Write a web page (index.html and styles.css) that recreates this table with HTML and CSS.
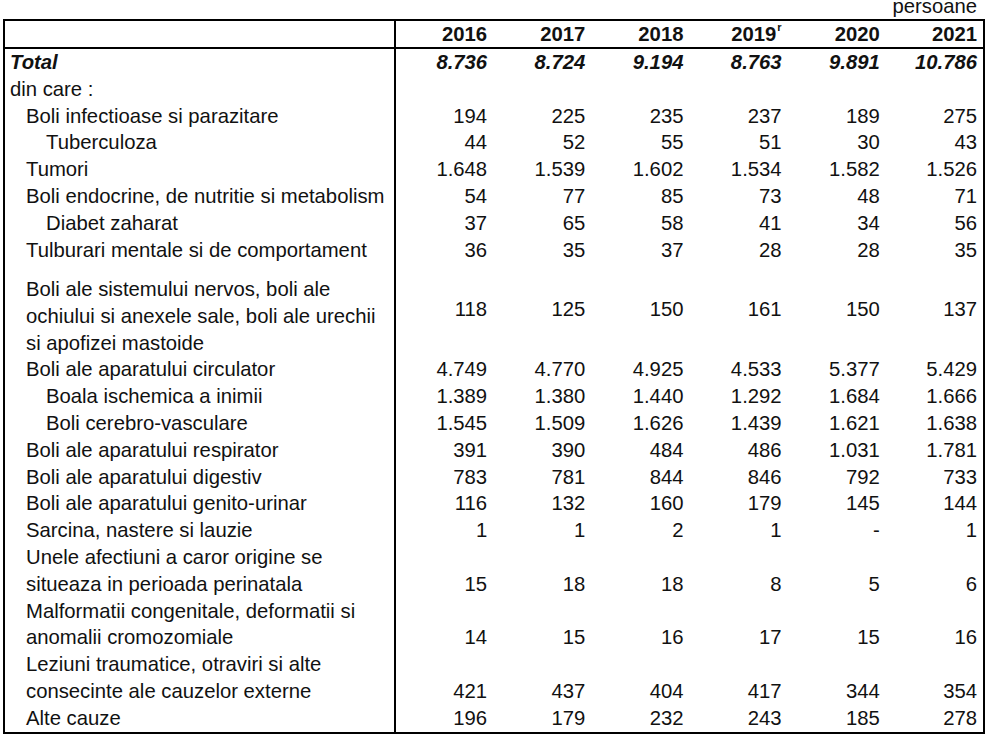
FILE: index.html
```html
<!DOCTYPE html>
<html>
<head>
<meta charset="utf-8">
<link rel="stylesheet" href="styles.css">
</head>
<body>
<div class="page">
  <div class="unit">persoane</div>
  <table class="data">
    <colgroup>
      <col class="c-label"><col><col><col><col><col><col>
    </colgroup>
    <thead>
      <tr class="head">
        <th class="label"></th>
        <th>2016</th><th>2017</th><th>2018</th><th>2019<span class="sup">r</span></th><th>2020</th><th>2021</th>
      </tr>
    </thead>
    <tbody>
      <tr class="total">
        <td class="label l0">Total</td>
        <td>8.736</td><td>8.724</td><td>9.194</td><td>8.763</td><td>9.891</td><td>10.786</td>
      </tr>
      <tr>
        <td class="label l0">din care :</td>
        <td></td><td></td><td></td><td></td><td></td><td></td>
      </tr>
      <tr>
        <td class="label l1">Boli infectioase si parazitare</td>
        <td>194</td><td>225</td><td>235</td><td>237</td><td>189</td><td>275</td>
      </tr>
      <tr>
        <td class="label l2">Tuberculoza</td>
        <td>44</td><td>52</td><td>55</td><td>51</td><td>30</td><td>43</td>
      </tr>
      <tr>
        <td class="label l1">Tumori</td>
        <td>1.648</td><td>1.539</td><td>1.602</td><td>1.534</td><td>1.582</td><td>1.526</td>
      </tr>
      <tr>
        <td class="label l1">Boli endocrine, de nutritie si metabolism</td>
        <td>54</td><td>77</td><td>85</td><td>73</td><td>48</td><td>71</td>
      </tr>
      <tr>
        <td class="label l2">Diabet zaharat</td>
        <td>37</td><td>65</td><td>58</td><td>41</td><td>34</td><td>56</td>
      </tr>
      <tr>
        <td class="label l1">Tulburari mentale si de comportament</td>
        <td>36</td><td>35</td><td>37</td><td>28</td><td>28</td><td>35</td>
      </tr>
      <tr class="tall">
        <td class="label l1">Boli ale sistemului nervos, boli ale<br>ochiului si anexele sale, boli ale urechii<br>si apofizei mastoide</td>
        <td>118</td><td>125</td><td>150</td><td>161</td><td>150</td><td>137</td>
      </tr>
      <tr>
        <td class="label l1">Boli ale aparatului circulator</td>
        <td>4.749</td><td>4.770</td><td>4.925</td><td>4.533</td><td>5.377</td><td>5.429</td>
      </tr>
      <tr>
        <td class="label l2">Boala ischemica a inimii</td>
        <td>1.389</td><td>1.380</td><td>1.440</td><td>1.292</td><td>1.684</td><td>1.666</td>
      </tr>
      <tr>
        <td class="label l2">Boli cerebro-vasculare</td>
        <td>1.545</td><td>1.509</td><td>1.626</td><td>1.439</td><td>1.621</td><td>1.638</td>
      </tr>
      <tr>
        <td class="label l1">Boli ale aparatului respirator</td>
        <td>391</td><td>390</td><td>484</td><td>486</td><td>1.031</td><td>1.781</td>
      </tr>
      <tr>
        <td class="label l1">Boli ale aparatului digestiv</td>
        <td>783</td><td>781</td><td>844</td><td>846</td><td>792</td><td>733</td>
      </tr>
      <tr>
        <td class="label l1">Boli ale aparatului genito-urinar</td>
        <td>116</td><td>132</td><td>160</td><td>179</td><td>145</td><td>144</td>
      </tr>
      <tr>
        <td class="label l1">Sarcina, nastere si lauzie</td>
        <td>1</td><td>1</td><td>2</td><td>1</td><td class="dash">-</td><td>1</td>
      </tr>
      <tr class="two">
        <td class="label l1">Unele afectiuni a caror origine se<br>situeaza in perioada perinatala</td>
        <td>15</td><td>18</td><td>18</td><td>8</td><td>5</td><td>6</td>
      </tr>
      <tr class="two">
        <td class="label l1">Malformatii congenitale, deformatii si<br>anomalii cromozomiale</td>
        <td>14</td><td>15</td><td>16</td><td>17</td><td>15</td><td>16</td>
      </tr>
      <tr class="two">
        <td class="label l1">Leziuni traumatice, otraviri si alte<br>consecinte ale cauzelor externe</td>
        <td>421</td><td>437</td><td>404</td><td>417</td><td>344</td><td>354</td>
      </tr>
      <tr>
        <td class="label l1">Alte cauze</td>
        <td>196</td><td>179</td><td>232</td><td>243</td><td>185</td><td>278</td>
      </tr>
    </tbody>
  </table>
</div>
</body>
</html>
```

FILE: styles.css
```css
html, body {
  margin: 0;
  padding: 0;
  background: #ffffff;
}

.page {
  width: 1000px;
  height: 746px;
  overflow: hidden;
  font-family: "Liberation Sans", Arial, sans-serif;
  font-size: 20.3px;
  color: #111111;
  padding-left: 3px;
  box-sizing: border-box;
}

.unit {
  width: 974px;
  height: 19px;
  line-height: 12px;
  text-align: right;
  overflow: visible;
}

.data {
  width: 982px;
  border-collapse: collapse;
  table-layout: fixed;
  border: 2px solid #000;
}

.c-label {
  width: 391px;
}

.data th,
.data td {
  padding: 0 6px 0 0;
  line-height: 26.8px;
  height: 26.8px;
  text-align: right;
  vertical-align: bottom;
  white-space: nowrap;
}

.data th {
  font-weight: bold;
  height: 26px;
  line-height: 26px;
  vertical-align: middle;
  border-bottom: 2px solid #000;
}

.data td.label,
.data th.label {
  text-align: left;
  border-right: 2px solid #000;
  border-left: 2px solid #000;
}

.data td.l0 { padding-left: 5px; }
.data td.l1 { padding-left: 21px; }
.data td.l2 { padding-left: 41px; }

.total td {
  font-weight: bold;
  font-style: italic;
}

.tall td {
  height: 93px;
  vertical-align: middle;
}

.tall td.label {
  vertical-align: bottom;
}

.dash {
  padding-right: 8px;
}

.sup {
  font-size: 11px;
  vertical-align: top;
  line-height: 14px;
  position: relative;
  top: -1px;
  margin-left: 1px;
}
```
